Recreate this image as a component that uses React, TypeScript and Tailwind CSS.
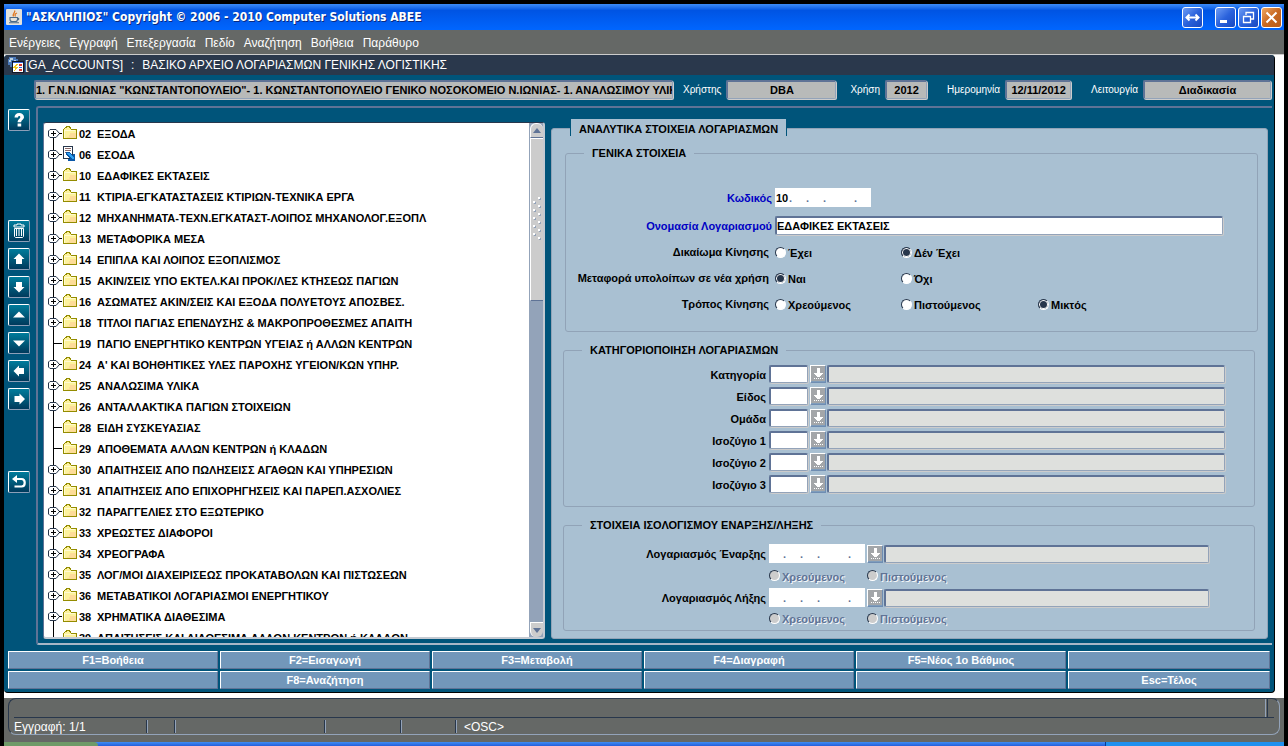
import React from "react";

type Account = { code: string; name: string; leaf?: boolean; doc?: boolean };

const ACCOUNTS: Account[] = [
  { code: "02", name: "ΕΞΟΔΑ" },
  { code: "06", name: "ΕΣΟΔΑ", doc: true },
  { code: "10", name: "ΕΔΑΦΙΚΕΣ ΕΚΤΑΣΕΙΣ" },
  { code: "11", name: "ΚΤΙΡΙΑ-ΕΓΚΑΤΑΣΤΑΣΕΙΣ ΚΤΙΡΙΩΝ-ΤΕΧΝΙΚΑ ΕΡΓΑ" },
  { code: "12", name: "ΜΗΧΑΝΗΜΑΤΑ-ΤΕΧΝ.ΕΓΚΑΤΑΣΤ-ΛΟΙΠΟΣ ΜΗΧΑΝΟΛΟΓ.ΕΞΟΠΛ" },
  { code: "13", name: "ΜΕΤΑΦΟΡΙΚΑ ΜΕΣΑ" },
  { code: "14", name: "ΕΠΙΠΛΑ ΚΑΙ ΛΟΙΠΟΣ ΕΞΟΠΛΙΣΜΟΣ" },
  { code: "15", name: "ΑΚΙΝ/ΣΕΙΣ ΥΠΟ ΕΚΤΕΛ.ΚΑΙ ΠΡΟΚ/ΛΕΣ ΚΤΗΣΕΩΣ ΠΑΓΙΩΝ" },
  { code: "16", name: "ΑΣΩΜΑΤΕΣ ΑΚΙΝ/ΣΕΙΣ ΚΑΙ ΕΞΟΔΑ ΠΟΛΥΕΤΟΥΣ ΑΠΟΣΒΕΣ." },
  { code: "18", name: "ΤΙΤΛΟΙ ΠΑΓΙΑΣ ΕΠΕΝΔΥΣΗΣ & ΜΑΚΡΟΠΡΟΘΕΣΜΕΣ ΑΠΑΙΤΗ" },
  { code: "19", name: "ΠΑΓΙΟ ΕΝΕΡΓΗΤΙΚΟ ΚΕΝΤΡΩΝ ΥΓΕΙΑΣ ή ΑΛΛΩΝ ΚΕΝΤΡΩΝ", leaf: true },
  { code: "24", name: "Α' ΚΑΙ ΒΟΗΘΗΤΙΚΕΣ ΥΛΕΣ ΠΑΡΟΧΗΣ ΥΓΕΙΟΝ/ΚΩΝ ΥΠΗΡ." },
  { code: "25", name: "ΑΝΑΛΩΣΙΜΑ ΥΛΙΚΑ" },
  { code: "26", name: "ΑΝΤΑΛΛΑΚΤΙΚΑ ΠΑΓΙΩΝ ΣΤΟΙΧΕΙΩΝ" },
  { code: "28", name: "ΕΙΔΗ ΣΥΣΚΕΥΑΣΙΑΣ", leaf: true },
  { code: "29", name: "ΑΠΟΘΕΜΑΤΑ ΑΛΛΩΝ ΚΕΝΤΡΩΝ ή ΚΛΑΔΩΝ", leaf: true },
  { code: "30", name: "ΑΠΑΙΤΗΣΕΙΣ ΑΠΟ ΠΩΛΗΣΕΙΣΣ ΑΓΑΘΩΝ ΚΑΙ ΥΠΗΡΕΣΙΩΝ" },
  { code: "31", name: "ΑΠΑΙΤΗΣΕΙΣ ΑΠΟ ΕΠΙΧΟΡΗΓΗΣΕΙΣ ΚΑΙ ΠΑΡΕΠ.ΑΣΧΟΛΙΕΣ" },
  { code: "32", name: "ΠΑΡΑΓΓΕΛΙΕΣ ΣΤΟ ΕΞΩΤΕΡΙΚΟ" },
  { code: "33", name: "ΧΡΕΩΣΤΕΣ ΔΙΑΦΟΡΟΙ" },
  { code: "34", name: "ΧΡΕΟΓΡΑΦΑ" },
  { code: "35", name: "ΛΟΓ/ΜΟΙ ΔΙΑΧΕΙΡΙΣΕΩΣ ΠΡΟΚΑΤΑΒΟΛΩΝ ΚΑΙ ΠΙΣΤΩΣΕΩΝ" },
  { code: "36", name: "ΜΕΤΑΒΑΤΙΚΟΙ ΛΟΓΑΡΙΑΣΜΟΙ ΕΝΕΡΓΗΤΙΚΟΥ" },
  { code: "38", name: "ΧΡΗΜΑΤΙΚΑ ΔΙΑΘΕΣΙΜΑ" },
  { code: "39", name: "ΑΠΑΙΤΗΣΕΙΣ ΚΑΙ ΔΙΑΘΕΣΙΜΑ ΑΛΛΩΝ ΚΕΝΤΡΩΝ ή ΚΛΑΔΩΝ", leaf: true },
];

const FIELD =
  "min-w-0 rounded-[2px] border-t-2 border-l-2 border-r border-b border-t-[#5f7396] border-l-[#5f7396] border-r-[#93a3b9] border-b-[#93a3b9] shadow-[1px_1px_0_#cccccc] outline-none";

function Bevel({ label, children }: { label: string; children: React.ReactNode }) {
  return (
    <button
      type="button"
      aria-label={label}
      className="flex size-[22px] shrink-0 items-center justify-center rounded-[2px] border border-t-white border-l-white border-r-[#8c9fb8] border-b-[#8c9fb8] bg-linear-to-b from-[#007c9c] via-[#005b7b] to-[#003a5c]"
    >
      <svg viewBox="0 0 16 16" className="size-4 fill-white">
        {children}
      </svg>
    </button>
  );
}

function TitleButton({ label, close, children }: { label: string; close?: boolean; children: React.ReactNode }) {
  return (
    <button
      type="button"
      aria-label={label}
      className={
        close
          ? "flex size-[21px] items-center justify-center rounded-[3px] border border-white bg-linear-to-br from-[#f0a860] via-[#c86820] to-[#b85c1c]"
          : "flex size-[21px] items-center justify-center rounded-[3px] border border-white bg-linear-to-br from-[#6f9cf4] via-[#2a62dc] to-[#1848c0]"
      }
    >
      <svg viewBox="0 0 19 19" className="size-[19px]" fill="none" stroke="white" strokeWidth="2">
        {children}
      </svg>
    </button>
  );
}

function Folder() {
  return (
    <svg viewBox="0 0 14 14" className="h-[14px] w-[14px] shrink-0" shapeRendering="crispEdges">
      <path d="M1 3h1V2h1V1h4v1h1v2h5v8H1z" fill="#fdf29c" />
      <path d="M7 7h6v5H4v-1h2V9h1z" fill="#fddc98" />
      <path d="M0 12V3h1V2h1V1h1V0h4v1h1v2h5v1H8V3H7V2H6V1H4v1H2v1H1v9z" fill="#948c00" />
      <path d="M13 3h1v10H0v-1h13z" fill="#948c00" />
      <path d="M1 4h11v1H2v7H1z" fill="#fffbd0" />
    </svg>
  );
}

function DocLink() {
  return (
    <svg viewBox="0 0 14 15" className="h-[15px] w-[14px] shrink-0" shapeRendering="crispEdges">
      <path d="M0 0h10v13H0z" fill="#28374c" />
      <path d="M1 1h8v11H1z" fill="white" />
      <path d="M2 2h6v1H2zM2 4h6v1H2zM2 6h3v1H2z" fill="#8a6a6a" />
      <path d="M3 6h3l4 4V8h2v7H5v-2h2L3 9z" fill="#0a58a8" />
      <path d="M4 7h2l4 4h1v2H9z" fill="#30a0f0" />
    </svg>
  );
}

function TreeHandle({ leaf, first, last }: { leaf?: boolean; first?: boolean; last?: boolean }) {
  return (
    <svg viewBox="0 0 15 21" className="h-[21px] w-[15px] shrink-0" fill="none">
      <path
        d={first ? "M5.5 15V21" : leaf ? "M5.5 0V21" : "M5.5 0V6M5.5 15V21"}
        stroke="black"
        shapeRendering="crispEdges"
      />
      {leaf ? (
        !last && <path d="M6 10.5H14" stroke="black" shapeRendering="crispEdges" />
      ) : (
        <>
          <path d="M2 6.5H8L11.5 10.5L8 14.5H2L.5 13V8z" fill="white" stroke="#28374c" />
          <path d="M3 10.5H8M5.5 8V13M11 10.5H14" stroke="black" shapeRendering="crispEdges" />
        </>
      )}
    </svg>
  );
}

function ListButton({ label }: { label: string }) {
  return (
    <button
      type="button"
      aria-label={label}
      className="ml-[2px] mr-px flex h-[18px] w-4 shrink-0 items-center justify-center border border-t-white border-l-white border-r-[#6f8db2] border-b-[#6f8db2] bg-[#a3a6a9] shadow-[inset_0_-1px_0_#7f9dbc]"
    >
      <svg viewBox="0 0 14 16" className="h-4 w-[14px]" fill="white" shapeRendering="crispEdges">
        <path d="M6 2h3v5h3v1h-1v1h-1v1H9v1H6v-1H5V9H4V8H3V7h3z" />
        <path d="M3 12h1v1H3zM5 12h1v1H5zM7 12h1v1H7zM9 12h1v1H9zM11 12h1v1h-1z" />
      </svg>
    </button>
  );
}

function Radio({ name, label, checked, disabled }: { name: string; label: string; checked?: boolean; disabled?: boolean }) {
  return (
    <label
      className={
        disabled
          ? "flex items-center gap-[2px] whitespace-nowrap text-[#5f7396] [text-shadow:1px_1px_0_#f4f6f8]"
          : "flex items-center gap-[2px] whitespace-nowrap"
      }
    >
      <input
        type="radio"
        name={name}
        defaultChecked={checked}
        disabled={disabled}
        className="size-[11px] shrink-0 appearance-none rounded-full border border-t-[#28374c] border-l-[#28374c] border-r-white border-b-white bg-white checked:bg-[#28374c] checked:shadow-[inset_0_0_0_1px_white] disabled:bg-[#cccccc]"
      />
      <span className="pt-[2px]">{label}</span>
    </label>
  );
}

function CodeInput({ id, value }: { id: string; value: string }) {
  return (
    <span className="relative block h-[19px] w-24 shrink-0 bg-white">
      <input id={id} defaultValue={value} className="block h-[19px] w-full bg-transparent pl-px outline-none" />
      <span className="pointer-events-none absolute inset-0 grid grid-cols-[17px_17px_31px_1fr] items-center pl-[14px] text-[#5f7396]">
        <span>.</span>
        <span>.</span>
        <span>.</span>
        <span>.</span>
      </span>
    </span>
  );
}

function Legend({ children }: { children: React.ReactNode }) {
  return <legend className="ml-[18px] h-[14px] px-2 leading-[14px] whitespace-nowrap">{children}</legend>;
}

const GROUP = "min-w-0 rounded-[3px] border border-[#91a3b7]";

function Header() {
  const items = [
    { id: "user", label: "Χρήστης", value: "DBA", box: "w-[110px]", gap: "pl-[10px]" },
    { id: "year", label: "Χρήση", value: "2012", box: "w-[42px]", gap: "pl-[14px]" },
    { id: "date", label: "Ημερομηνία", value: "12/11/2012", box: "w-[66px]", gap: "pl-5" },
    { id: "mode", label: "Λειτουργία", value: "Διαδικασία", box: "w-[128px]", gap: "pl-5" },
  ];
  return (
    <div className="flex items-center pt-[5px] pr-[3px] pl-[30px]">
      <input
        readOnly
        aria-label="Οργανισμός"
        defaultValue={'1. Γ.Ν.Ν.ΙΩΝΙΑΣ "ΚΩΝΣΤΑΝΤΟΠΟΥΛΕΙΟ"- 1. ΚΩΝΣΤΑΝΤΟΠΟΥΛΕΙΟ ΓΕΝΙΚΟ ΝΟΣΟΚΟΜΕΙΟ Ν.ΙΩΝΙΑΣ- 1. ΑΝΑΛΩΣΙΜΟΥ ΥΛΙΚΟΥ'}
        className={`${FIELD} h-[19px] flex-1 bg-[#b8bab9]`}
      />
      {items.map((it) => (
        <div key={it.id} className="flex items-center">
          <label htmlFor={it.id} className={`${it.gap} pr-[5px] text-[10px] font-normal whitespace-nowrap text-white`}>
            {it.label}
          </label>
          <input id={it.id} readOnly defaultValue={it.value} className={`${FIELD} ${it.box} h-[19px] bg-[#b8bab9] text-center`} />
        </div>
      ))}
    </div>
  );
}

function Sidebar() {
  return (
    <nav className="flex w-8 shrink-0 flex-col gap-[6px] pt-[3px] pl-1">
      <Bevel label="Βοήθεια">
        <path d="M3.500 5.500C3.500 2.800 5.400 1 8.200 1C11 1 13 2.700 13 5.100C13 7.700 10.200 8.100 10.200 10.200H6.600C6.600 7.400 9.300 6.900 9.300 5.300C9.300 4.400 8.900 3.900 8.200 3.900C7.400 3.900 7 4.600 7 5.500zM6.600 11.400H10.200V14.500H6.600z" />
      </Bevel>
      <div className="h-[77px]" />
      <Bevel label="Διαγραφή">
        <path d="M6 2V1h4v1h3v2H3V2z" fill="none" stroke="white" />
        <path d="M3.500 5.500h9v8l-1 1h-7l-1-1z" fill="none" stroke="white" />
        <path d="M5 6h1v7H5zM7.500 6h1v7h-1zM10 6h1v7h-1z" />
      </Bevel>
      <Bevel label="Πρώτη εγγραφή">
        <path d="M8 2.500l5.500 5.500H11V13H5V8H2.500z" />
      </Bevel>
      <Bevel label="Τελευταία εγγραφή">
        <path d="M8 13.500L2.500 8H5V3h6v5h2.500z" />
      </Bevel>
      <Bevel label="Προηγούμενη εγγραφή">
        <path d="M8 4.500l6 6H2z" />
      </Bevel>
      <Bevel label="Επόμενη εγγραφή">
        <path d="M8 11.500L2 5.500h12z" />
      </Bevel>
      <Bevel label="Αριστερά">
        <path d="M2.500 8L8 2.500V5h5v6H8v2.500z" />
      </Bevel>
      <Bevel label="Δεξιά">
        <path d="M14 8L8.500 2.500V5h-5v6h5v2.500z" />
      </Bevel>
      <div className="h-[49px]" />
      <Bevel label="Επιστροφή">
        <path d="M6 1L1 5L6 9z" />
        <path d="M5 5h5.500c4.300 0 4.300 7.500 0 7.500H3.500" fill="none" stroke="white" strokeWidth="2.200" />
      </Bevel>
    </nav>
  );
}

function Tree() {
  return (
    <div className="flex w-[502px] shrink-0 rounded-[3px] border-t border-r-2 border-b-2 border-l border-t-[#28374c] border-r-[#c4cad2] border-b-[#c4cad2] border-l-[#5f7396] bg-white">
      <ul className="min-h-0 min-w-0 flex-1 overflow-hidden pl-1">
        {ACCOUNTS.map((a, i) => (
          <li key={a.code} className="flex h-[21px] items-center">
            <TreeHandle leaf={a.leaf} first={i === 0} last={i === ACCOUNTS.length - 1} />
            <span className="flex w-4 justify-start pb-[2px]">{a.doc ? <DocLink /> : <Folder />}</span>
            <span className="w-[18px] shrink-0">{a.code}</span>
            <span className="whitespace-nowrap">{a.name}</span>
          </li>
        ))}
      </ul>
      <div className="flex w-[14px] shrink-0 flex-col bg-[#93a3b9] pl-px">
        <button type="button" aria-label="Πάνω" className="flex h-[14px] shrink-0 items-center justify-center rounded-t-md border-t border-l border-white bg-[#cccccc]">
          <svg viewBox="0 0 8 5" className="h-[5px] w-2 fill-[#5f7396]"><path d="M0 5L4 0L8 5z" /></svg>
        </button>
        <div className="flex h-[32%] items-center justify-center border-t border-b border-l border-t-[#5f7396] border-b-[#5f7396] border-l-white bg-[#cccccc] shadow-[inset_0_1px_0_white]">
          <svg viewBox="0 0 8 44" className="h-[44px] w-2" shapeRendering="crispEdges">
            {[0, 1, 2, 3, 4, 5].map((n) => (
              <g key={n}>
                <path d={`M6 ${n * 8 + 1}h2v2H6z`} fill="#93a3b9" />
                <path d={`M5 ${n * 8}h2v2H5z`} fill="white" />
                {n < 5 && <path d={`M1 ${n * 8 + 5}h2v2H1z`} fill="#93a3b9" />}
                {n < 5 && <path d={`M0 ${n * 8 + 4}h2v2H0z`} fill="white" />}
              </g>
            ))}
          </svg>
        </div>
        <div className="flex-1" />
        <button type="button" aria-label="Κάτω" className="flex h-[15px] shrink-0 items-center justify-center rounded-b-md border-t border-l border-white bg-[#cccccc]">
          <svg viewBox="0 0 8 5" className="h-[5px] w-2 fill-[#5f7396]"><path d="M0 0L4 5L8 0z" /></svg>
        </button>
      </div>
    </div>
  );
}

function General() {
  return (
    <fieldset className={`${GROUP} mt-[10px] mr-[9px] ml-[13px] pb-[14px]`}>
      <Legend>ΓΕΝΙΚΑ ΣΤΟΙΧΕΙΑ</Legend>
      <div className="grid grid-cols-[206px_1fr] items-center gap-x-[3px] pt-7 pr-[34px]">
        <label htmlFor="code" className="text-right text-[#0000c4]">Κωδικός</label>
        <CodeInput id="code" value="10" />
        <label htmlFor="name" className="mt-[9px] text-right text-[#0000c4]">Ονομασία Λογαριασμού</label>
        <input id="name" defaultValue="ΕΔΑΦΙΚΕΣ ΕΚΤΑΣΕΙΣ" className={`${FIELD} mt-[9px] h-[19px] bg-white`} />
      </div>
      <div className="grid grid-cols-[203px_126px_137px_1fr] auto-rows-[26px] items-center pt-1 [&>label]:ml-[6px] [&>span]:text-right">
        <span>Δικαίωμα Κίνησης</span>
        <Radio name="move" label="Έχει" />
        <Radio name="move" label="Δέν Έχει" checked />
        <i />
        <span>Μεταφορά υπολοίπων σε νέα χρήση</span>
        <Radio name="carry" label="Ναι" checked />
        <Radio name="carry" label="Όχι" />
        <i />
        <span>Τρόπος Κίνησης</span>
        <Radio name="kind" label="Χρεούμενος" />
        <Radio name="kind" label="Πιστούμενος" />
        <Radio name="kind" label="Μικτός" checked />
      </div>
    </fieldset>
  );
}

function Categories() {
  const rows = ["Κατηγορία", "Είδος", "Ομάδα", "Ισοζύγιο 1", "Ισοζύγιο 2", "Ισοζύγιο 3"];
  return (
    <fieldset className={`${GROUP} mt-[11px] mr-3 ml-[11px] pb-[13px]`}>
      <Legend>ΚΑΤΗΓΟΡΙΟΠΟΙΗΣΗ ΛΟΓΑΡΙΑΣΜΩΝ</Legend>
      <div className="flex flex-col gap-1 pt-2 pr-[29px]">
        {rows.map((label, i) => (
          <div key={label} className="flex items-center">
            <label htmlFor={`cat${i}`} className="w-[205px] shrink-0 pt-px pr-[3px] text-right">{label}</label>
            <input id={`cat${i}`} className={`${FIELD} h-[18px] w-[39px] bg-white`} />
            <ListButton label={`Λίστα: ${label}`} />
            <input readOnly aria-label={`${label}: περιγραφή`} className={`${FIELD} h-[18px] flex-1 bg-[#dee0dd]`} />
          </div>
        ))}
      </div>
    </fieldset>
  );
}

function Balance() {
  const rows = ["Λογαριασμός Έναρξης", "Λογαριασμός Λήξης"];
  return (
    <fieldset className={`${GROUP} mt-[11px] mr-3 ml-[11px] pb-px`}>
      <Legend>ΣΤΟΙΧΕΙΑ ΙΣΟΛΟΓΙΣΜΟΥ ΕΝΑΡΞΗΣ/ΛΗΞΗΣ</Legend>
      <div className="flex flex-col pt-3">
        {rows.map((label, i) => (
          <React.Fragment key={label}>
            <div className="flex items-center pr-[45px]">
              <label htmlFor={`bal${i}`} className="w-[205px] shrink-0 pt-px pr-[3px] text-right">{label}</label>
              <CodeInput id={`bal${i}`} value="" />
              <ListButton label={`Λίστα: ${label}`} />
              <input readOnly aria-label={`${label}: περιγραφή`} className={`${FIELD} h-[18px] flex-1 bg-[#dee0dd]`} />
            </div>
            <div className={i === 0 ? "flex h-[25px] pl-[205px]" : "flex h-[22px] pl-[205px]"}>
              <span className="flex w-[98px]"><Radio name={`side${i}`} label="Χρεούμενος" disabled /></span>
              <Radio name={`side${i}`} label="Πιστούμενος" disabled />
            </div>
          </React.Fragment>
        ))}
      </div>
    </fieldset>
  );
}

function FunctionKeys() {
  const keys = [
    "F1=Βοήθεια", "F2=Εισαγωγή", "F3=Μεταβολή", "F4=Διαγραφή", "F5=Νέος 1ο Βάθμιος", "",
    "", "F8=Αναζήτηση", "", "", "", "Esc=Τέλος",
  ];
  return (
    <div className="grid grid-cols-[repeat(5,210fr)_202fr] gap-[2px] px-1 pt-[6px] pb-[3px]">
      {keys.map((k, i) => (
        <button
          key={i}
          type="button"
          aria-label={k || "Κενό πλήκτρο"}
          className="h-[18px] min-w-0 rounded-[1px] border border-t-white border-l-white border-r-[#5f7396] border-b-[#5f7396] bg-[#7297ba] leading-4 text-white"
        >
          {k}
        </button>
      ))}
    </div>
  );
}

function StatusBar() {
  const cell = "h-[13px] border-l border-[#28374c] shadow-[inset_1px_0_0_#93a3b9]";
  return (
    <footer className="bg-[#656866] px-1 pb-[7px] text-xs font-normal text-white">
      <div className="rounded-lg border border-t-[#28374c] border-r-[#93a3b9] border-b-[#93a3b9] border-l-[#28374c] px-[5px]">
        <div className="flex h-[19px] items-start justify-end border-b border-[#28374c]">
          <span className="mr-[6px] h-[18px] w-[3px] border-r border-l border-r-[#28374c] border-l-[#93a3b9]" />
        </div>
        <div className="flex h-4 items-center">
          <span className="w-[132px] pt-[2px]">Εγγραφή: 1/1</span>
          <span className={`${cell} w-7`} />
          <span className={`${cell} w-[150px]`} />
          <span className={`${cell} w-[76px]`} />
          <span className={`${cell} w-[55px]`} />
          <span className={`${cell} flex flex-1 items-center pt-[2px] pl-2`}>&lt;OSC&gt;</span>
        </div>
      </div>
    </footer>
  );
}

export default function App() {
  const menus = ["Ενέργειες", "Εγγραφή", "Επεξεργασία", "Πεδίο", "Αναζήτηση", "Βοήθεια", "Παράθυρο"];
  return (
    <div className='flex h-screen min-h-[746px] flex-col bg-black px-1 pt-1 font-["Liberation_Sans",sans-serif] text-[11px] leading-[14px] font-bold text-black'>
      <header className="flex h-[26px] shrink-0 items-center bg-linear-to-b from-[#3c8cf8] via-[#0054e3] via-25% to-[#0066ff] pr-[2px] pl-[2px]">
        <svg viewBox="0 0 16 16" className="size-4 shrink-0">
          <rect width="16" height="16" rx="1" fill="#e4e2dc" />
          <path d="M8.500 1.500C10 3.500 6 4.500 7.500 7.500M11 4c-2 1-2.500 1.500-1.500 3.500" stroke="#e07820" strokeWidth="1.300" fill="none" />
          <path d="M4 8.500h7.500v2c0 1-1 2-2 2H6c-1 0-2-1-2-2zM11.500 9c2 0 1.500 2-.5 2M3 13.800h10" stroke="#4a6a88" strokeWidth="1.100" fill="none" />
        </svg>
        <h1 className='min-w-0 flex-1 truncate pl-1 font-["DejaVu_Sans_Condensed","Noto_Sans",sans-serif] text-xs font-bold text-white [text-shadow:1px_1px_0_#0a2a80]'>
          "ΑΣΚΛΗΠΙΟΣ" Copyright © 2006 - 2010 Computer Solutions ABEE
        </h1>
        <div className="flex gap-[2px]">
          <span className="mr-[10px] flex">
            <TitleButton label="Εναλλαγή">
              <path d="M4 9.500H15M6.500 6.500L3.500 9.500L6.500 12.500M12.500 6.500L15.500 9.500L12.500 12.500" />
            </TitleButton>
          </span>
          <TitleButton label="Ελαχιστοποίηση">
            <path d="M4 13.500H11" strokeWidth="3" />
          </TitleButton>
          <TitleButton label="Επαναφορά">
            <path d="M7 7V4.500H14.500V11H12M4.500 8.500H11.500V14.500H4.500zM4 8.500H12M6.500 4.500H15" strokeWidth="1.300" />
          </TitleButton>
          <TitleButton label="Κλείσιμο" close>
            <path d="M4.500 4.500L14.500 14.500M14.500 4.500L4.500 14.500" />
          </TitleButton>
        </div>
      </header>

      <nav className="flex h-6 shrink-0 items-center gap-[9px] bg-[#656866] pl-[5px] text-xs font-normal text-white">
        {menus.map((m) => (
          <button key={m} type="button" className="pt-[2px]">{m}</button>
        ))}
      </nav>

      <div className="flex min-h-0 flex-1 flex-col border-t border-[#cccccc] bg-white pr-[9px] pb-[5px]">
        <main className="flex min-h-0 flex-1 flex-col rounded-[4px] border-r border-b border-black bg-[#00547a]">
          <h2 className="flex h-5 shrink-0 items-center rounded-t-[4px] bg-[#2a384c] pl-1 text-xs font-normal text-white">
            <svg viewBox="0 0 16 16" className="size-4 shrink-0" shapeRendering="crispEdges">
              <path d="M1 0h7v2h2v5H6v3H2V8H0V2h1z" fill="#4a78b8" />
              <path d="M2 1h3v2H3v2H1V3h1zM6 3h2v2H6z" fill="#b8d0e0" />
              <path d="M4 4h12v12H4z" fill="#101828" />
              <path d="M5 6h10v9H5z" fill="white" />
              <path d="M5 5h10v1H5z" fill="#3868d8" />
              <path d="M11 7h3v2h-3zM11 12h3v2h-3z" fill="#d83830" />
              <path d="M11 10h3v1h-3z" fill="#3868d8" />
              <path d="M8 7h2L8 10h2l-4 5 1-4H5z" fill="#f0c820" />
            </svg>
            <span className="flex gap-2 pl-px whitespace-nowrap">
              <span>[GA_ACCOUNTS]</span>
              <span>:</span>
              <span>ΒΑΣΙΚΟ ΑΡΧΕΙΟ ΛΟΓΑΡΙΑΣΜΩΝ ΓΕΝΙΚΗΣ ΛΟΓΙΣΤΙΚΗΣ</span>
            </span>
          </h2>
          <Header />
          <div className="flex min-h-0 flex-1 pt-[7px] pr-[2px]">
            <Sidebar />
            <div className="flex min-w-0 flex-1 gap-[6px] rounded-l-[3px] border-t-2 border-b-2 border-l-2 border-t-[#5f7396] border-b-[#a8b6c6] border-l-[#5f7396] pt-[14px] pr-1 pb-1 pl-[5px]">
              <Tree />
              <section className="mt-[6px] min-w-0 flex-1 rounded-[3px] border border-[#91a3b7] bg-[#a9c0d2]">
                <h3 className="-mt-[10px] ml-[18px] h-[17px] w-fit border-x border-[#00547a] bg-[#a9c0d2] px-2 pt-[3px] whitespace-nowrap">
                  ΑΝΑΛΥΤΙΚΑ ΣΤΟΙΧΕΙΑ ΛΟΓΑΡΙΑΣΜΩΝ
                </h3>
                <General />
                <Categories />
                <Balance />
              </section>
            </div>
          </div>
          <FunctionKeys />
        </main>
      </div>

      <StatusBar />
      <div className="flex h-1 shrink-0 bg-linear-to-b from-[#3f8cf3] to-[#245edb]">
        <span className="w-[94px] rounded-tr-md bg-[#6f9a68]" />
        <span className="flex-1" />
        <span className="w-[14%] border-l border-[#0a3a90] bg-[#1f90f0]" />
      </div>
    </div>
  );
}
